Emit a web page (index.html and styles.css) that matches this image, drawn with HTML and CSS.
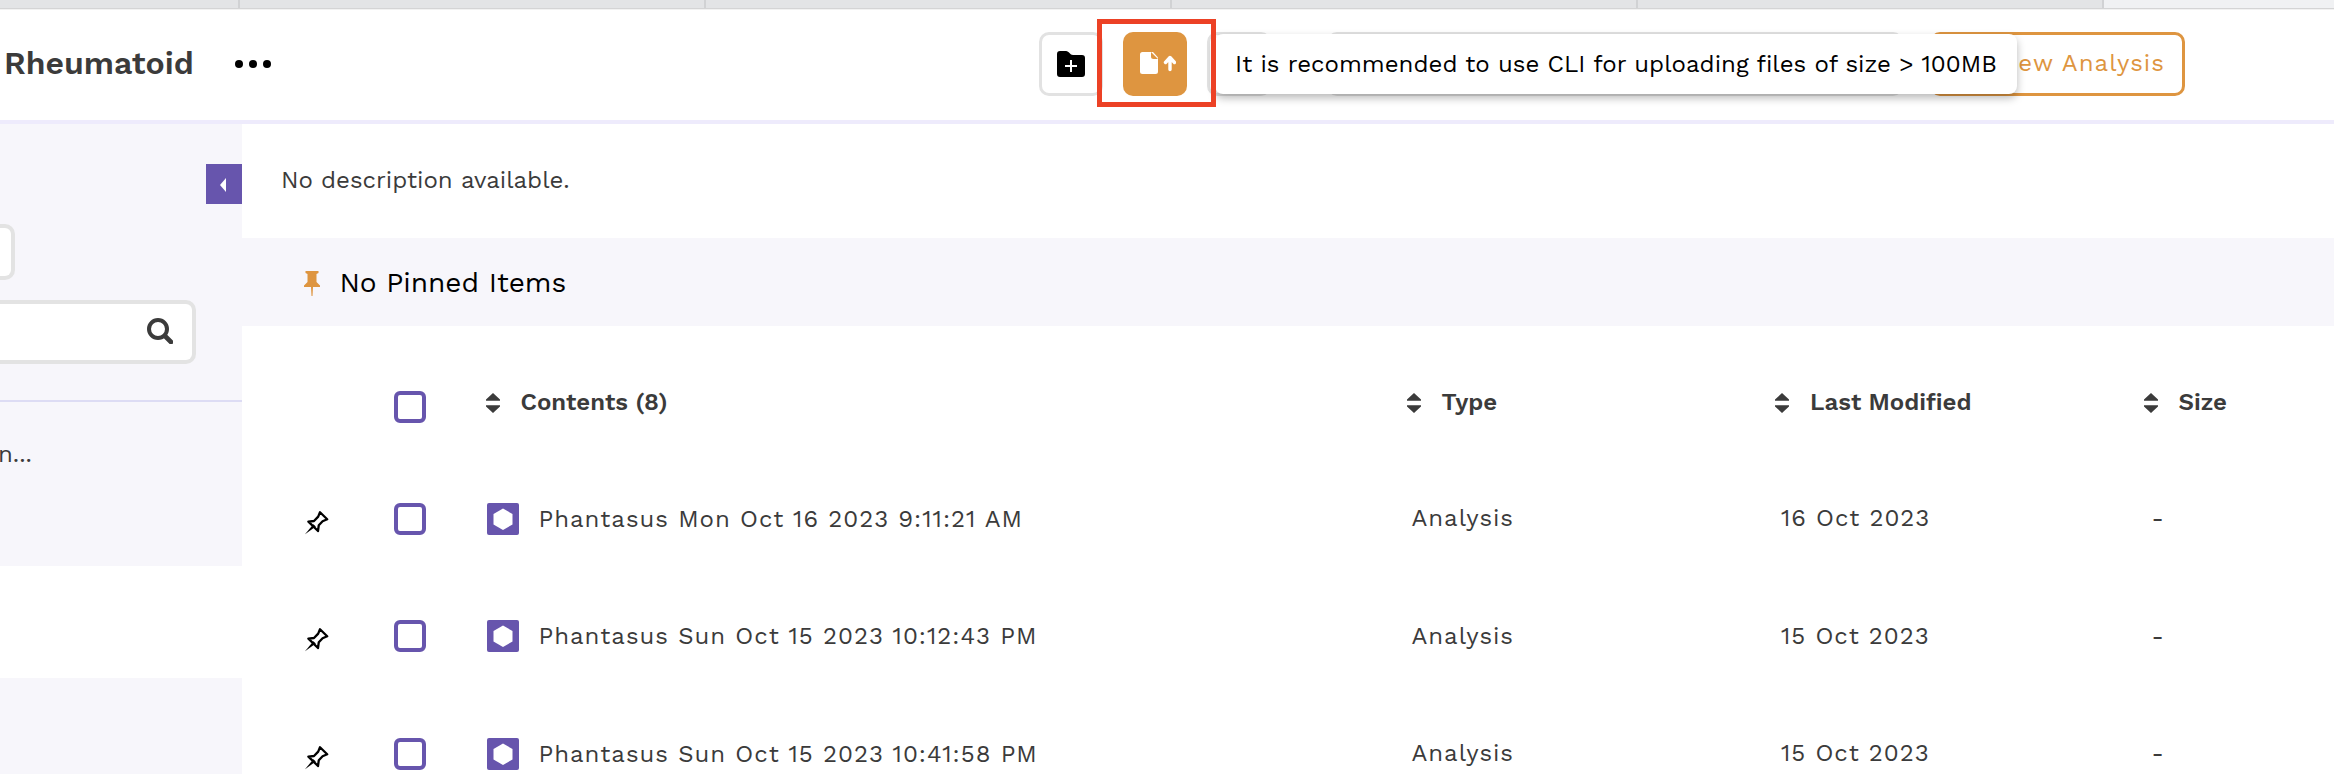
FILE: index.html
```html
<!DOCTYPE html>
<html lang="en">
<head>
<meta charset="utf-8">
<title>Rheumatoid</title>
<link rel="stylesheet" href="styles.css">
</head>
<body>
<svg class="defs" width="0" height="0">
  <symbol id="sort" viewBox="0 0 14 20"><path d="M7 0 14 6.600V7.800H0V6.600zM7 20 0 13.400V12.200h14v1.200z"/></symbol>
  <symbol id="pin" viewBox="0 0 24 24"><path d="M15 1.200 22.200 8.200 17.600 10.200 13.800 14.200 13 20 3.400 10.600 9 10 13.200 5.600Z" fill="none" stroke="#000" stroke-width="2.300" stroke-linejoin="round"/><path d="M8.400 13.200 10.800 15.400 0 23.200Z"/></symbol>
  <symbol id="hex" viewBox="0 0 32 32"><path d="M16 5.500 25.500 11v10.500L16 27 6.500 21.500V11z" fill="#fff"/></symbol>
</svg>
<div class="tabs"><i></i><i></i><i></i><i></i><i></i><i class="active"></i></div>
<header class="topbar">
  <h1 class="title">Rheumatoid</h1>
  <svg class="dots" viewBox="0 0 36 8"><circle cx="4" cy="4" r="4"/><circle cx="18" cy="4" r="4"/><circle cx="32" cy="4" r="4"/></svg>
  <div class="actions">
    <button class="btn"><svg width="28" height="26" viewBox="0 0 28 26"><path d="M3 0h6c3 0 4 4 7 4h9a3 3 0 0 1 3 3v16a3 3 0 0 1-3 3H3a3 3 0 0 1-3-3V3a3 3 0 0 1 3-3z"/><path d="M14 9v12M8 15h12" stroke="#fff" stroke-width="2"/></svg></button>
    <button class="btn upload"><svg width="36" height="22" viewBox="0 0 36 22"><path d="M2.500 0H11v4.500A2.500 2.500 0 0 0 13.500 7H18v12.500a2.500 2.500 0 0 1-2.500 2.500h-13A2.500 2.500 0 0 1 0 19.500v-17A2.500 2.500 0 0 1 2.500 0z" fill="#fff"/><path d="M11 0h2l5 5.500V7z" fill="#fff"/><path d="M30 17.500V6M25.500 10.500 30 5.500l4.500 5" fill="none" stroke="#fff" stroke-width="3.400" stroke-linecap="round" stroke-linejoin="round"/></svg></button>
    <button class="btn"></button>
    <div class="btn wide"></div>
    <button class="btn new">ew Analysis</button>
    <div class="highlight"></div>
    <div class="tooltip">It is recommended to use CLI for uploading files of size &gt; 100MB</div>
  </div>
</header>
<div class="page">
  <aside class="side">
    <div class="panel">
      <div class="toggle"><svg width="6" height="14" viewBox="0 0 6 14"><path d="M6 0v14L0 7z" fill="#fff"/></svg></div>
      <div class="select"></div>
      <div class="search"><svg width="26" height="26" viewBox="0 0 26 26" fill="none" stroke="#3b3b3b"><circle cx="11" cy="11" r="9" stroke-width="4"/><path d="m18 18 6 6" stroke-width="4.600" stroke-linecap="round"/></svg></div>
      <div class="folder">n...</div>
    </div>
    <div class="panel rest"></div>
  </aside>
  <main class="main">
    <p class="desc">No description available.</p>
    <div class="pinned"><svg width="16" height="25" viewBox="0 0 16 25"><path d="M1.500 0h13v2L12.500 3v8l3.500 3.500V16H9l-.5 9h-1L7 16H0v-1.500L3.500 11V3l-2-1z" fill="#de9540"/></svg><span>No Pinned Items</span></div>
    <div class="row head">
      <span></span><span class="check"></span>
      <span class="col first"><svg><use href="#sort"/></svg><b>Contents (8)</b></span>
      <span class="col"><svg><use href="#sort"/></svg><b>Type</b></span>
      <span class="col"><svg><use href="#sort"/></svg><b>Last Modified</b></span>
      <span class="col"><svg><use href="#sort"/></svg><b>Size</b></span>
    </div>
    <div class="row">
      <svg class="pin"><use href="#pin"/></svg><span class="check"></span>
      <span class="name"><svg class="hex"><use href="#hex"/></svg><span>Phantasus Mon Oct 16 2023 9:11:21 AM</span></span>
      <span class="cell">Analysis</span><span class="cell date">16 Oct 2023</span><span class="cell dash">-</span>
    </div>
    <div class="row">
      <svg class="pin"><use href="#pin"/></svg><span class="check"></span>
      <span class="name"><svg class="hex"><use href="#hex"/></svg><span>Phantasus Sun Oct 15 2023 10:12:43 PM</span></span>
      <span class="cell">Analysis</span><span class="cell date">15 Oct 2023</span><span class="cell dash">-</span>
    </div>
    <div class="row">
      <svg class="pin"><use href="#pin"/></svg><span class="check"></span>
      <span class="name"><svg class="hex"><use href="#hex"/></svg><span>Phantasus Sun Oct 15 2023 10:41:58 PM</span></span>
      <span class="cell">Analysis</span><span class="cell date">15 Oct 2023</span><span class="cell dash">-</span>
    </div>
  </main>
</div>
</body>
</html>
```
FILE: styles.css
```css
* { box-sizing: border-box; }
body { margin: 0; height: 774px; overflow: hidden; background: #fff; color: #3b3b3b; font: 24px/32px "Work Sans", Roboto, sans-serif; }
svg { display: block; flex: none; }
.defs { position: absolute; }
.tabs { display: flex; height: 10px; background: #e3e4e6; border-bottom: 1px solid #f2f2f2; box-shadow: inset 0 -1px #d4d4d5; }
.tabs i { flex: none; width: 466px; height: 8px; border-right: 2px solid #d1d2d4; }
.tabs i:first-child { width: 240px; }
.tabs i.active { flex: 1; border: 0; background: #f0f1f3; }

.topbar { display: flex; height: 114px; padding-top: 22px; border-bottom: 4px solid #eeebfc; }
.title { margin: 13px 0 0 4px; width: 231px; font-size: 32px; line-height: 36px; font-weight: 600; white-space: nowrap; }
.dots { width: 36px; height: 8px; margin-top: 28px; }
.actions { position: relative; display: flex; gap: 20px; margin-left: 768px; height: 64px; }
.btn { flex: none; width: 64px; height: 64px; padding: 0; display: flex; align-items: center; justify-content: center; background: #fff; border: 3px solid #e2e2e2; border-radius: 10px; font: inherit; }
.btn.upload { background: #de9540; border: 0; position: relative; z-index: 2; padding: 0 11px 2px 0; justify-content: flex-end; }
.btn.wide { width: 576px; margin-left: 36px; }
.btn.new { width: 255px; margin-left: 7px; border-color: #de9540; color: #de9540; justify-content: flex-end; padding: 0 17px 2px 0; letter-spacing: 1.05px; white-space: nowrap; }
.highlight { position: absolute; left: 58px; top: -13.5px; width: 118.5px; height: 88.5px; border: 5px solid #ec4125; z-index: 3; }
.tooltip { position: absolute; left: 176px; top: 2px; width: 802px; height: 60px; padding-left: 20px; background: #fff; border-radius: 8px; box-shadow: 0 4px 8px rgba(0,0,0,.28); color: #000; line-height: 60px; letter-spacing: .025px; white-space: nowrap; z-index: 1; }

.page { display: flex; height: 650px; overflow: hidden; }
.side { width: 242px; flex: none; }
.panel { background: #f7f6fb; height: 442px; padding-top: 40px; }
.panel.rest { margin-top: 112px; height: 96px; padding: 0; }
.toggle { width: 36px; height: 40px; margin-left: auto; padding-right: 2px; background: #6755ad; display: flex; align-items: center; justify-content: center; }
.toggle svg { margin-top: 2px; }
.select { width: 15px; height: 56px; margin-top: 20px; background: #fff; border: 4px solid #e3e3e3; border-left: 0; border-radius: 0 10px 10px 0; }
.search { width: 196px; height: 64px; margin-top: 20px; padding-left: 147px; display: flex; align-items: center; background: #fff; border: 4px solid #e3e3e3; border-left: 0; border-radius: 0 10px 10px 0; }
.search svg { margin-top: -2px; }
.folder { margin-top: 36px; padding-top: 36px; border-top: 2px solid #dddcf4; text-indent: -2px; }

.main { flex: 1; min-width: 0; height: 650px; overflow: hidden; }
.desc { margin: 0; height: 114px; padding: 40px 0 0 39px; }
.pinned { display: flex; align-items: center; height: 88px; padding: 2px 0 0 62px; gap: 19.5px; background: #f7f6fb; color: #000; font-size: 28px; }
.row { display: grid; grid-template-columns: 152px 93px 920px 368.5px 368.5px 1fr; align-items: center; height: 117.5px; }
.row.head { height: 134px; }
.check { width: 32px; height: 32px; border: 4px solid #6755ad; border-radius: 6px; }
.head .check { margin-top: 28px; }
.col { display: flex; align-items: center; gap: 21px; margin: 19px 0 0 -.5px; }
.col.first { margin-left: -1.5px; }
.col svg { width: 14px; height: 20px; fill: #3b3b3b; }
.col b { font-weight: 600; margin-top: -2px; }
.pin { width: 24px; height: 24px; margin: 8px 0 0 62.5px; }
.name { display: flex; align-items: center; gap: 19.5px; letter-spacing: 1px; white-space: nowrap; }
.hex { width: 32px; height: 32px; background: #6755ad; border-radius: 2px; }
.cell { padding-left: 4.5px; margin-top: -1px; letter-spacing: .96px; }
.date { padding-left: 5.5px; }
.dash { padding-left: 7.5px; }
```
